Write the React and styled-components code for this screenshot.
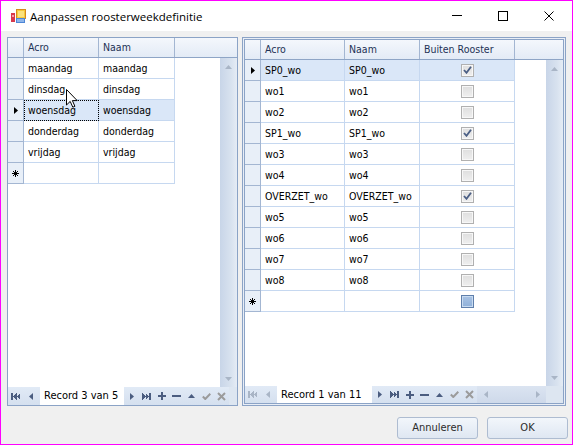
import React from 'react'
import styled, { createGlobalStyle, css } from 'styled-components'

const GRID_FONT = `"DejaVu Sans Condensed", "DejaVu Sans", sans-serif`

const leftColumns = [
  { key: 'acro', title: 'Acro', width: 75 },
  { key: 'naam', title: 'Naam', width: 76 },
]

const rightColumns = [
  { key: 'acro', title: 'Acro', width: 84 },
  { key: 'naam', title: 'Naam', width: 75 },
  { key: 'buiten', title: 'Buiten Rooster', width: 95, check: true },
]

const days = ['maandag', 'dinsdag', 'woensdag', 'donderdag', 'vrijdag'].map((d) => ({ acro: d, naam: d }))

const weeks = [
  ['SP0_wo', true], ['wo1', false], ['wo2', false], ['SP1_wo', true], ['wo3', false], ['wo4', false],
  ['OVERZET_wo', true], ['wo5', false], ['wo6', false], ['wo7', false], ['wo8', false],
].map(([acro, buiten]) => ({ acro, naam: acro, buiten }))

const GlobalStyle = createGlobalStyle`
  html, body { margin: 0; padding: 0; }
  body {
    width: 573px;
    height: 445px;
    overflow: hidden;
    font-family: ${GRID_FONT};
    background: #f0f0f0;
  }
`

const Window = styled.div`
  position: relative;
  width: 573px;
  height: 445px;
  box-sizing: border-box;
  border: 1px solid #ff00ff;
  background: #f0f0f0;
  display: flex;
  flex-direction: column;
`

const TitleBar = styled.div`
  height: 30px;
  flex: 0 0 30px;
  background: #fff;
  display: flex;
  align-items: center;
  padding-left: 9px;
`

const Title = styled.div`
  margin-left: 4px;
  font-family: "Open Sans", "Noto Sans", sans-serif;
  font-size: 11.5px;
  color: #000;
  flex: 1;
`

const CaptionButton = styled.div`
  width: 46px;
  height: 30px;
  display: flex;
  align-items: center;
  justify-content: center;
`

const Content = styled.div`
  display: flex;
  gap: 4px;
  padding: 6px 6px 0 6px;
`

const GridFrame = styled.div`
  box-sizing: border-box;
  width: ${(p) => p.$w}px;
  height: 369px;
  border: 1px solid #8ba3c6;
  display: flex;
  flex-direction: column;
  ${(p) => p.$focused && css`
    padding: 1px;
    background: #e9eef6;
  `}
`

const GridInner = styled.div`
  flex: 1;
  display: flex;
  flex-direction: column;
  background: #fff;
  overflow: hidden;
  ${(p) => p.$focused && css`
    border: 1px solid #8ba3c6;
  `}
`

const HeaderRow = styled.div`
  display: flex;
  height: 20px;
  flex: 0 0 20px;
  background: linear-gradient(#f4f7fc, #e3ebf6);
  border-bottom: 1px solid #8ea5c6;
  box-sizing: border-box;
`

const HeaderCell = styled.div`
  box-sizing: border-box;
  flex: 0 0 ${(p) => p.$w}px;
  border-right: 1px solid #a3b6d2;
  padding-left: 4px;
  line-height: 19px;
  font-size: 10.5px;
  color: #1e3256;
  white-space: nowrap;
  overflow: hidden;
`

const Body = styled.div`
  flex: 1;
  display: flex;
  min-height: 0;
`

const RowsArea = styled.div`
  flex: 1;
  background: #fff;
`

const Row = styled.div`
  display: flex;
  height: 21px;
`

const Indicator = styled.div`
  box-sizing: border-box;
  flex: 0 0 16px;
  height: 21px;
  background: #e8eff8;
  border-right: 1px solid #a3b6d2;
  border-bottom: 1px solid #a3b6d2;
  display: flex;
  align-items: center;
  justify-content: center;
`

const Cell = styled.div`
  box-sizing: border-box;
  flex: 0 0 ${(p) => p.$w}px;
  height: 21px;
  border-right: 1px solid #c6d8f0;
  border-bottom: 1px solid #c6d8f0;
  padding-left: ${(p) => (p.$check ? 0 : 4)}px;
  font-size: 10.5px;
  line-height: 20px;
  color: #000;
  white-space: nowrap;
  overflow: hidden;
  display: flex;
  align-items: center;
  justify-content: ${(p) => (p.$check ? 'center' : 'flex-start')};
  background: ${(p) => (p.$sel ? '#dae7f8' : '#fff')};
  ${(p) => p.$focus && css`
    outline: 1px dotted #000;
    outline-offset: -1px;
  `}
`

const VScroll = styled.div`
  flex: 0 0 17px;
  display: flex;
  flex-direction: column;
  justify-content: space-between;
  background: linear-gradient(to right, #c8d5e8, #d8e2ef 65%, #e5ecf5);
`

const ScrollButton = styled.div`
  width: ${(p) => p.$w || 17}px;
  height: ${(p) => p.$h || 17}px;
  display: flex;
  align-items: center;
  justify-content: center;
`

const Footer = styled.div`
  display: flex;
  height: ${(p) => p.$h}px;
  flex: 0 0 ${(p) => p.$h}px;
`

const Navigator = styled.div`
  display: flex;
  align-items: center;
  background: linear-gradient(#e1eaf6, #d5e0ef);
`

const NavButton = styled.div`
  width: 15px;
  height: 100%;
  display: flex;
  align-items: center;
  justify-content: center;
`

const RecordBox = styled.div`
  width: ${(p) => p.$w}px;
  height: 100%;
  margin-left: 2px;
  background: #fff;
  padding-left: 4px;
  box-sizing: border-box;
  font-size: 11px;
  line-height: ${(p) => p.$h}px;
  color: #000;
  white-space: nowrap;
`

const HScroll = styled.div`
  width: 69px;
  display: flex;
  justify-content: space-between;
  background: linear-gradient(#dbe4f1, #ced9ea);
`

const Corner = styled.div`
  flex: 1;
  background: #dde6f1;
`

const ButtonBar = styled.div`
  display: flex;
  justify-content: flex-end;
  gap: 9px;
  padding: 11px 4px 0 0;
`

const DialogButton = styled.div`
  box-sizing: border-box;
  width: 81px;
  height: 22px;
  border: 1px solid #aebcd1;
  border-radius: 3px;
  background: linear-gradient(#f2f6fb, #dfe7f2);
  font-size: 11px;
  line-height: 20px;
  text-align: center;
  color: #2b2b2b;
`

const Check = styled.div`
  box-sizing: border-box;
  width: 13px;
  height: 13px;
  border: 1px solid ${(p) => (p.$blue ? '#5f7fab' : '#b0b0b0')};
  box-shadow: inset 0 0 0 1px ${(p) => (p.$blue ? '#c8dbf1' : '#f7f7f7')};
  background: ${(p) => (p.$blue ? 'linear-gradient(#a9c3e4, #8fb0d9)' : 'linear-gradient(#dedede, #efefef)')};
  display: flex;
  align-items: center;
  justify-content: center;
`

const Cursor = styled.svg`
  position: absolute;
  left: 65px;
  top: 88px;
`

const ENABLED = '#4b5d80'
const DISABLED = '#9b9b9b'
const DIM = '#a9b5c6'

function NavIcon({ kind, color }) {
  if (kind === 'first') {
    return (
      <svg width="9" height="7" viewBox="0 0 9 7" shapeRendering="crispEdges">
        <rect x="0" y="0" width="2" height="7" fill={color} />
        <polygon points="5.5,0 2,3.5 5.5,7" fill={color} />
        <polygon points="9,0 5.5,3.5 9,7" fill={color} />
      </svg>
    )
  }
  if (kind === 'last') {
    return (
      <svg width="9" height="7" viewBox="0 0 9 7" shapeRendering="crispEdges">
        <polygon points="0,0 3.5,3.5 0,7" fill={color} />
        <polygon points="3.5,0 7,3.5 3.5,7" fill={color} />
        <rect x="7" y="0" width="2" height="7" fill={color} />
      </svg>
    )
  }
  if (kind === 'prev') {
    return (
      <svg width="4" height="7" viewBox="0 0 4 7">
        <polygon points="4,0 0,3.5 4,7" fill={color} />
      </svg>
    )
  }
  if (kind === 'next') {
    return (
      <svg width="4" height="7" viewBox="0 0 4 7">
        <polygon points="0,0 4,3.5 0,7" fill={color} />
      </svg>
    )
  }
  if (kind === 'add') {
    return (
      <svg width="8" height="8" viewBox="0 0 8 8" shapeRendering="crispEdges">
        <rect x="3" y="0" width="2" height="8" fill={color} />
        <rect x="0" y="3" width="8" height="2" fill={color} />
      </svg>
    )
  }
  if (kind === 'remove') {
    return (
      <svg width="9" height="2" viewBox="0 0 9 2" shapeRendering="crispEdges">
        <rect x="0" y="0" width="9" height="2" fill={color} />
      </svg>
    )
  }
  if (kind === 'up') {
    return (
      <svg width="7" height="4" viewBox="0 0 7 4">
        <polygon points="0,4 3.5,0 7,4" fill={color} />
      </svg>
    )
  }
  if (kind === 'down') {
    return (
      <svg width="7" height="4" viewBox="0 0 7 4">
        <polygon points="0,0 3.5,4 7,0" fill={color} />
      </svg>
    )
  }
  if (kind === 'ok') {
    return (
      <svg width="9" height="7" viewBox="0 0 9 7">
        <polyline points="0.8,3.5 3.3,6 8.3,0.8" fill="none" stroke={color} strokeWidth="2" />
      </svg>
    )
  }
  return (
    <svg width="9" height="9" viewBox="0 0 9 9">
      <path d="M1 1 L8 8 M8 1 L1 8" stroke={color} strokeWidth="2" />
    </svg>
  )
}

function RowMarker({ current, isNew }) {
  if (current) {
    return (
      <svg width="4" height="7" viewBox="0 0 4 7">
        <polygon points="0,0 4,3.5 0,7" fill="#000" />
      </svg>
    )
  }
  if (isNew) {
    return (
      <svg width="7" height="7" viewBox="0 0 7 7">
        <path d="M3.5 0 V7 M0 3.5 H7 M1 1 L6 6 M6 1 L1 6" stroke="#000" strokeWidth="1" />
      </svg>
    )
  }
  return null
}

function CheckBox({ checked, blue }) {
  return (
    <Check $blue={blue}>
      {checked && (
        <svg width="9" height="8" viewBox="0 0 9 8">
          <polyline points="1,4 3.5,6.8 8,0.8" fill="none" stroke="#4b5f85" strokeWidth="1.8" />
        </svg>
      )}
    </Check>
  )
}

function DataGrid({ width, columns, rows, current, focusKey, focused, record, recordWidth, footerHeight, atStart, hscroll }) {
  const navColor = atStart ? DIM : ENABLED
  const allRows = [...rows, null]

  return (
    <GridFrame $w={width} $focused={focused}>
      <GridInner $focused={focused}>
        <HeaderRow>
          <HeaderCell $w={16} />
          {columns.map((col) => (
            <HeaderCell key={col.key} $w={col.width}>{col.title}</HeaderCell>
          ))}
        </HeaderRow>
        <Body>
          <RowsArea>
            {allRows.map((row, i) => (
              <Row key={i}>
                <Indicator>
                  <RowMarker current={i === current} isNew={row === null} />
                </Indicator>
                {columns.map((col) => (
                  <Cell
                    key={col.key}
                    $w={col.width}
                    $check={col.check}
                    $sel={i === current}
                    $focus={i === current && col.key === focusKey}
                  >
                    {col.check
                      ? <CheckBox checked={row && row[col.key]} blue={row === null} />
                      : row && row[col.key]}
                  </Cell>
                ))}
              </Row>
            ))}
          </RowsArea>
          <VScroll>
            <ScrollButton><NavIcon kind="up" color={DIM} /></ScrollButton>
            <ScrollButton><NavIcon kind="down" color={DIM} /></ScrollButton>
          </VScroll>
        </Body>
        <Footer $h={footerHeight}>
          <Navigator>
            <NavButton><NavIcon kind="first" color={navColor} /></NavButton>
            <NavButton><NavIcon kind="prev" color={navColor} /></NavButton>
            <RecordBox $w={recordWidth} $h={footerHeight}>{record}</RecordBox>
            <NavButton><NavIcon kind="next" color={ENABLED} /></NavButton>
            <NavButton><NavIcon kind="last" color={ENABLED} /></NavButton>
            <NavButton><NavIcon kind="add" color={ENABLED} /></NavButton>
            <NavButton><NavIcon kind="remove" color={ENABLED} /></NavButton>
            <NavButton><NavIcon kind="up" color={ENABLED} /></NavButton>
            <NavButton><NavIcon kind="ok" color={DISABLED} /></NavButton>
            <NavButton><NavIcon kind="cancel" color={DISABLED} /></NavButton>
          </Navigator>
          {hscroll && (
            <HScroll>
              <ScrollButton $h={footerHeight}><NavIcon kind="prev" color={DIM} /></ScrollButton>
              <ScrollButton $h={footerHeight}><NavIcon kind="next" color={DIM} /></ScrollButton>
            </HScroll>
          )}
          <Corner />
        </Footer>
      </GridInner>
    </GridFrame>
  )
}

function AppIcon() {
  return (
    <svg width="16" height="16" viewBox="0 0 16 16" shapeRendering="crispEdges">
      <rect x="6" y="1" width="9" height="9" fill="#f6c93b" stroke="#d68a1c" />
      <rect x="7.5" y="2.5" width="6" height="6" fill="#fbe27c" />
      <rect x="1" y="5" width="4" height="9" fill="#d8384c" />
      <rect x="2" y="7" width="2" height="2" fill="#f4a0a8" />
      <rect x="6" y="10" width="9" height="5" fill="#4d86d6" />
      <rect x="7" y="11" width="7" height="3" fill="#8fb6ea" />
    </svg>
  )
}

function App() {
  return (
    <>
      <GlobalStyle />
      <Window>
        <TitleBar>
          <AppIcon />
          <Title>Aanpassen roosterweekdefinitie</Title>
          <CaptionButton>
            <svg width="10" height="10" viewBox="0 0 10 10" shapeRendering="crispEdges">
              <rect x="0" y="4" width="10" height="1" fill="#000" />
            </svg>
          </CaptionButton>
          <CaptionButton>
            <svg width="10" height="10" viewBox="0 0 10 10" shapeRendering="crispEdges">
              <rect x="0.5" y="0.5" width="9" height="9" fill="none" stroke="#000" />
            </svg>
          </CaptionButton>
          <CaptionButton>
            <svg width="10" height="10" viewBox="0 0 10 10">
              <path d="M0.5 0.5 L9.5 9.5 M9.5 0.5 L0.5 9.5" stroke="#000" strokeWidth="1" />
            </svg>
          </CaptionButton>
        </TitleBar>
        <Content>
          <DataGrid
            width={231}
            columns={leftColumns}
            rows={days}
            current={2}
            focusKey="acro"
            record="Record 3 van 5"
            recordWidth={84}
            footerHeight={18}
          />
          <DataGrid
            width={324}
            columns={rightColumns}
            rows={weeks}
            current={0}
            focused
            record="Record 1 van 11"
            recordWidth={95}
            footerHeight={17}
            atStart
            hscroll
          />
        </Content>
        <ButtonBar>
          <DialogButton>Annuleren</DialogButton>
          <DialogButton>OK</DialogButton>
        </ButtonBar>
        <Cursor width="12" height="19" viewBox="0 0 12 19">
          <path d="M0.5 0.5 L0.5 16 L4.2 12.4 L6.8 18.2 L8.9 17.3 L6.4 11.6 L11.2 11.6 Z" fill="#fff" stroke="#000" strokeWidth="1" />
        </Cursor>
      </Window>
    </>
  )
}

export default App
